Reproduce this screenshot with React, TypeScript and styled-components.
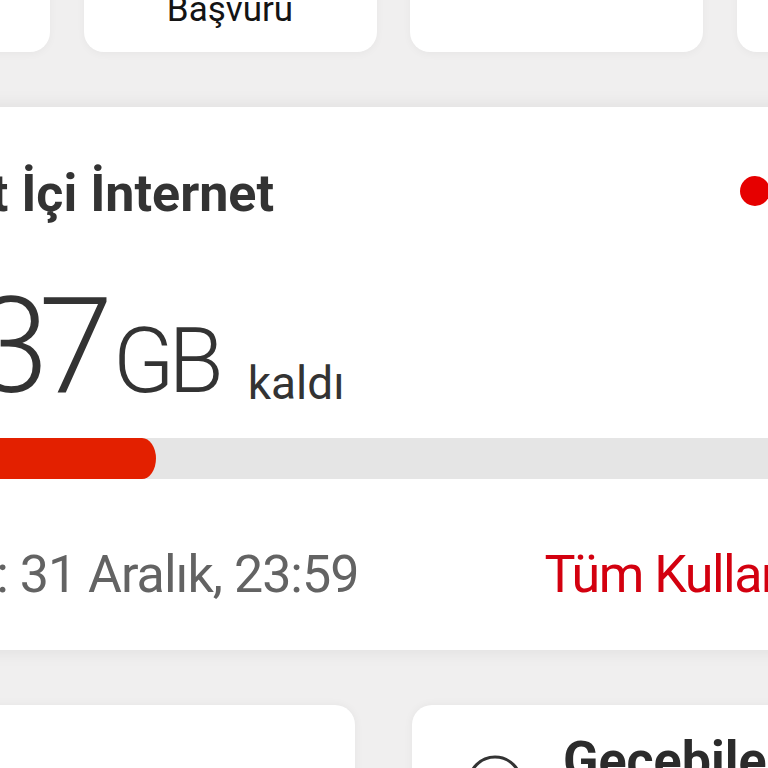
import React from "react";
import styled, { createGlobalStyle } from "styled-components";

const Global = createGlobalStyle`
  html, body {
    margin: 0;
    padding: 0;
    background: #f0efef;
    overflow: hidden;
  }
  body {
    font-family: Roboto, "Noto Sans", "Liberation Sans", sans-serif;
    width: 768px;
    height: 768px;
  }
`;

const Viewport = styled.div`
  width: 768px;
  height: 768px;
  overflow: hidden;
`;

const Page = styled.div`
  width: 1100px;
  margin-left: -250px;
  display: flex;
  flex-direction: column;
`;

const ShortcutRow = styled.div`
  display: flex;
  gap: 33.5px;
  padding-left: 7px;
  margin-top: -98px;
`;

const ShortcutCard = styled.div`
  flex: 0 0 293px;
  height: 150px;
  box-sizing: border-box;
  background: #fff;
  border-radius: 20px;
  box-shadow: 0 2px 8px rgba(0, 0, 0, 0.04);
  display: flex;
  flex-direction: column;
  justify-content: flex-end;
  align-items: center;
  padding-bottom: 21px;
`;

const ShortcutLabel = styled.span`
  font-size: 35px;
  line-height: 42px;
  color: #141414;
`;

const UsageCard = styled.section`
  margin-top: 55px;
  background: #fff;
  box-shadow: 0 0 18px rgba(0, 0, 0, 0.08);
  padding: 57px 80px 45px 160px;
`;

const Header = styled.div`
  display: flex;
  align-items: center;
  height: 60px;
`;

const Title = styled.h2`
  margin: 0;
  font-size: 52px;
  line-height: 60px;
  font-weight: 700;
  color: #333;
  white-space: nowrap;
`;

const StatusDot = styled.span`
  width: 30px;
  height: 30px;
  border-radius: 50%;
  background: #e60000;
  margin-left: auto;
  margin-bottom: 6px;
`;

const Amount = styled.div`
  margin-top: 56px;
  height: 134px;
  line-height: 1;
  white-space: nowrap;
  color: #333;
`;

const BigValue = styled.span`
  font-size: 134px;
  font-weight: 300;
  letter-spacing: -10px;
`;

const Unit = styled.span`
  font-size: 90px;
  font-weight: 300;
  letter-spacing: -6px;
  margin-left: 10px;
`;

const Remaining = styled.span`
  font-size: 46px;
  font-weight: 400;
  margin-left: 30px;
  vertical-align: -7px;
`;

const Track = styled.div`
  margin-top: 24px;
  height: 41px;
  background: #e5e5e5;
`;

const Fill = styled.div`
  height: 100%;
  background: #e32000;
  border-radius: 0 14px 14px 0 / 0 50% 50% 0;
`;

const Footer = styled.div`
  margin-top: 66px;
  display: flex;
  align-items: baseline;
  gap: 186px;
  font-size: 52px;
  line-height: 60px;
  white-space: nowrap;
`;

const DateText = styled.span`
  color: #636363;
  letter-spacing: -1px;
`;

const AllUsageLink = styled.a`
  color: #d3000f;
  text-decoration: none;
  letter-spacing: -1.5px;
`;

const BottomRow = styled.div`
  margin-top: 55px;
  display: flex;
  gap: 57px;
  padding-left: 7px;
`;

const OfferCard = styled.div`
  flex: 0 0 598px;
  height: 200px;
  box-sizing: border-box;
  background: #fff;
  border-radius: 20px;
  box-shadow: 0 0 10px rgba(0, 0, 0, 0.05);
  display: flex;
  align-items: flex-start;
  gap: 40px;
  padding: 26px 0 0 55px;
`;

const OfferIcon = styled.svg`
  flex: 0 0 56px;
  margin-top: 24px;
`;

const OfferTitle = styled.h3`
  margin: 0;
  font-size: 52px;
  line-height: 60px;
  font-weight: 700;
  color: #2b2b2b;
  white-space: nowrap;
`;

const usage = { remaining: 137, total: 478 };

export default function App() {
  const pct = (usage.remaining / usage.total) * 100;
  return (
    <Viewport>
      <Global />
      <Page>
        <ShortcutRow>
          <ShortcutCard />
          <ShortcutCard>
            <ShortcutLabel>Başvuru</ShortcutLabel>
          </ShortcutCard>
          <ShortcutCard />
          <ShortcutCard />
        </ShortcutRow>

        <UsageCard>
          <Header>
            <Title>Yurt İçi İnternet</Title>
            <StatusDot />
          </Header>
          <Amount>
            <BigValue>{usage.remaining}</BigValue>
            <Unit>GB</Unit>
            <Remaining>kaldı</Remaining>
          </Amount>
          <Track>
            <Fill style={{ width: `${pct}%` }} />
          </Track>
          <Footer>
            <DateText>Son: 31 Aralık, 23:59</DateText>
            <AllUsageLink href="#">Tüm Kullanımlar</AllUsageLink>
          </Footer>
        </UsageCard>

        <BottomRow>
          <OfferCard />
          <OfferCard>
            <OfferIcon width="56" height="56" viewBox="0 0 56 56">
              <circle cx="28" cy="28" r="26" fill="none" stroke="#333" strokeWidth="3" />
            </OfferIcon>
            <OfferTitle>Geçebileceğin Paketler</OfferTitle>
          </OfferCard>
        </BottomRow>
      </Page>
    </Viewport>
  );
}
